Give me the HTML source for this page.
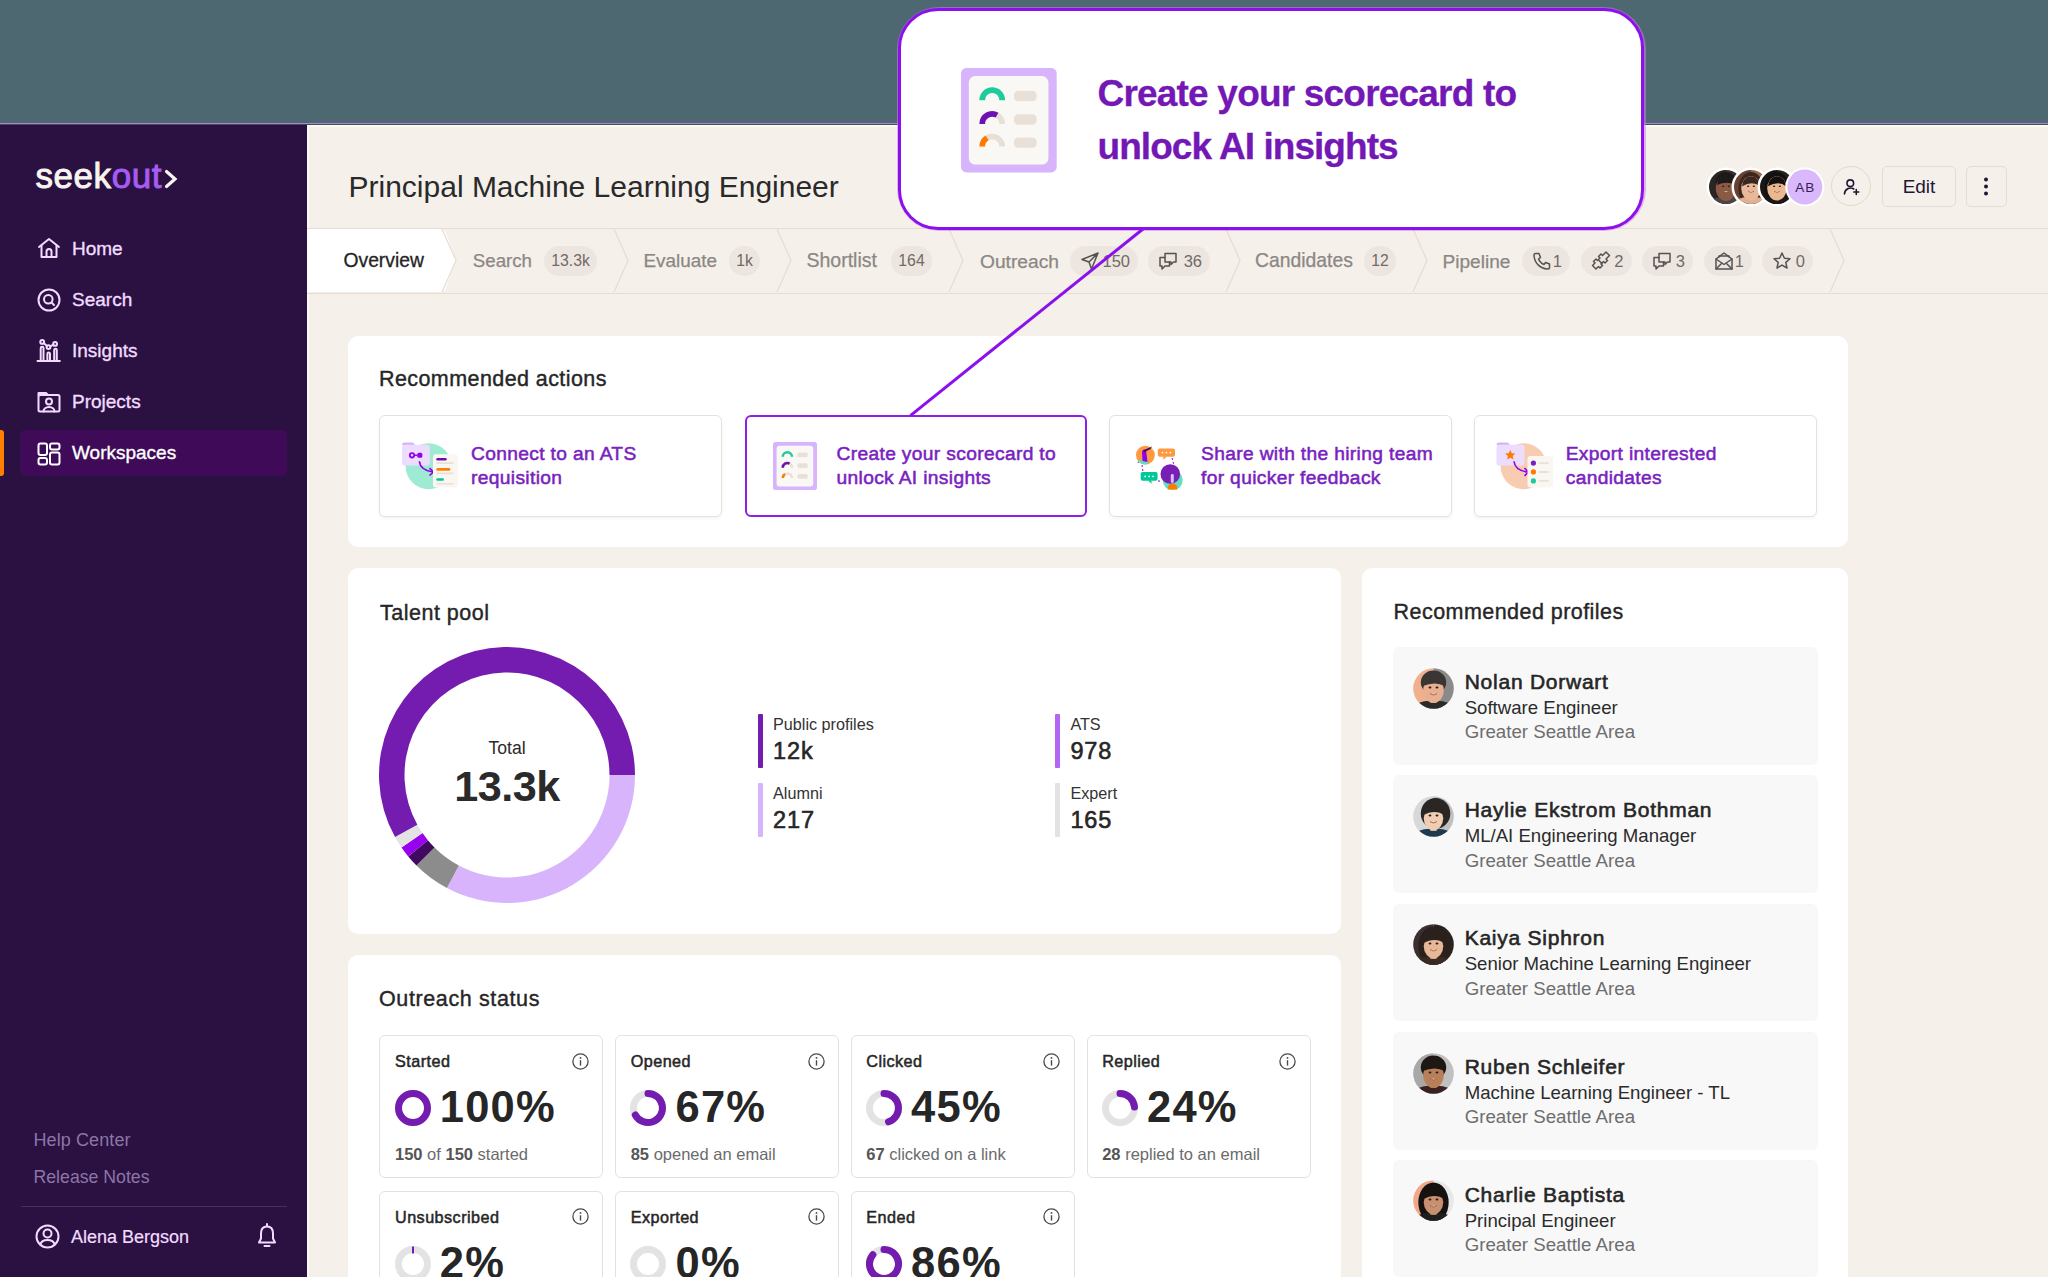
<!DOCTYPE html>
<html><head><meta charset="utf-8"><title>SeekOut</title>
<style>
html,body{margin:0;padding:0;}
body{width:2048px;height:1277px;overflow:hidden;position:relative;background:#f5f0ea;font-family:"Liberation Sans", sans-serif;}
.t{position:absolute;white-space:nowrap;}
.r{position:absolute;box-sizing:border-box;}
svg.r{overflow:visible;}
</style></head><body>
<div class="r" style="left:0px;top:0px;width:2048px;height:125px;background:#4d6870;"></div><div class="r" style="left:0px;top:123px;width:2048px;height:1px;background:#b57ede;"></div><div class="r" style="left:0px;top:124px;width:2048px;height:1px;background:#3b5258;"></div><div class="r" style="left:0px;top:125px;width:307px;height:1152px;background:#2a1142;"></div><div class="r" style="left:307px;top:125px;width:1741px;height:2px;background:#fcfaf5;"></div><div class="r" style="left:307px;top:125px;width:2px;height:1152px;background:#fcfaf5;"></div><div class="t" style="left:35.50px;top:158.17px;font-size:35px;line-height:35px;color:#f8f5ee;letter-spacing:0.55px;-webkit-text-stroke:0.9px currentColor;">seek<span style="color:#a55cf2">out</span></div><svg class="r" style="left:158.5px;top:165px;" width="22" height="26" viewBox="0 0 22 26"><path d="M7.5 6.5 L16 14 L7.5 21.5" fill="none" stroke="#f8f5ee" stroke-width="3.2" stroke-linecap="round" stroke-linejoin="miter"/></svg><div class="r" style="left:20px;top:430px;width:267px;height:46px;background:#3f0b59;border-radius:5px;"></div><div class="r" style="left:0px;top:430px;width:4px;height:46px;background:#ff8000;border-radius:0 3px 3px 0;"></div><div class="t" style="left:72.00px;top:239.12px;font-size:19px;line-height:19px;color:#f1dcff;-webkit-text-stroke:0.35px currentColor;">Home</div><div class="t" style="left:72.00px;top:290.12px;font-size:19px;line-height:19px;color:#f1dcff;-webkit-text-stroke:0.35px currentColor;">Search</div><div class="t" style="left:72.00px;top:340.92px;font-size:19px;line-height:19px;color:#f1dcff;-webkit-text-stroke:0.35px currentColor;">Insights</div><div class="t" style="left:72.00px;top:391.92px;font-size:19px;line-height:19px;color:#f1dcff;-webkit-text-stroke:0.35px currentColor;">Projects</div><div class="t" style="left:72.00px;top:442.92px;font-size:19px;line-height:19px;color:#ffffff;-webkit-text-stroke:0.35px currentColor;">Workspaces</div><svg class="r" style="left:37px;top:237px;" width="24" height="22" viewBox="0 0 24 22"><path d="M2 10 L12 2 L22 10" fill="none" stroke="#f1dcff" stroke-width="2" stroke-linecap="round" stroke-linejoin="round"/><path d="M4.5 8.5 V20 H19.5 V8.5" fill="none" stroke="#f1dcff" stroke-width="2" stroke-linecap="round" stroke-linejoin="round"/><path d="M9.5 20 V14.5 A2.5 2.5 0 0 1 14.5 14.5 V20" fill="none" stroke="#f1dcff" stroke-width="2" stroke-linecap="round" stroke-linejoin="round"/></svg><svg class="r" style="left:37px;top:288px;" width="24" height="24" viewBox="0 0 24 24"><circle cx="12" cy="12" r="10.5" fill="none" stroke="#f1dcff" stroke-width="2" stroke-linecap="round" stroke-linejoin="round"/><circle cx="11.3" cy="11.3" r="4.3" fill="none" stroke="#f1dcff" stroke-width="2" stroke-linecap="round" stroke-linejoin="round"/><path d="M14.5 14.5 L17 17" fill="none" stroke="#f1dcff" stroke-width="2" stroke-linecap="round" stroke-linejoin="round"/></svg><svg class="r" style="left:37px;top:339px;" width="24" height="24" viewBox="0 0 24 24"><path d="M0.5 21.9 H22.8" fill="none" stroke="#f1dcff" stroke-width="2" stroke-linecap="round" stroke-linejoin="round" stroke-width="1.7"/><path d="M3.7 21.9 V9.2 A1.4 1.4 0 0 1 6.5 9.2 V21.9 M10.4 21.9 V14.8 A1.3 1.3 0 0 1 13 14.8 V21.9 M17.2 21.9 V11 A1.3 1.3 0 0 1 19.8 11 V21.9" fill="none" stroke="#f1dcff" stroke-width="2" stroke-linecap="round" stroke-linejoin="round" stroke-width="1.6"/><circle cx="5.2" cy="2.9" r="1.9" fill="none" stroke="#f1dcff" stroke-width="2" stroke-linecap="round" stroke-linejoin="round" stroke-width="1.6"/><circle cx="11.5" cy="8.1" r="1.9" fill="none" stroke="#f1dcff" stroke-width="2" stroke-linecap="round" stroke-linejoin="round" stroke-width="1.6"/><circle cx="18.1" cy="4.9" r="1.9" fill="none" stroke="#f1dcff" stroke-width="2" stroke-linecap="round" stroke-linejoin="round" stroke-width="1.6"/><path d="M6.7 4.1 L10 6.9 M13.2 7.3 L16.4 5.7" fill="none" stroke="#f1dcff" stroke-width="2" stroke-linecap="round" stroke-linejoin="round" stroke-width="1.6"/></svg><svg class="r" style="left:37px;top:391px;" width="24" height="22" viewBox="0 0 24 22"><path d="M1.5 4 V2 H9 L11 4" fill="none" stroke="#f1dcff" stroke-width="2" stroke-linecap="round" stroke-linejoin="round"/><rect x="1.5" y="4" width="21" height="16.5" rx="1.5" fill="none" stroke="#f1dcff" stroke-width="2" stroke-linecap="round" stroke-linejoin="round"/><circle cx="12" cy="10.5" r="3" fill="none" stroke="#f1dcff" stroke-width="2" stroke-linecap="round" stroke-linejoin="round"/><path d="M6.5 20.5 A5.5 4.5 0 0 1 17.5 20.5" fill="none" stroke="#f1dcff" stroke-width="2" stroke-linecap="round" stroke-linejoin="round"/></svg><svg class="r" style="left:37px;top:441.5px;" width="24" height="24" viewBox="0 0 24 24"><rect x="1.5" y="1.5" width="8.5" height="11.5" rx="2" fill="none" stroke="#ffffff" stroke-width="2" stroke-linecap="round" stroke-linejoin="round"/><rect x="13" y="1.5" width="9.5" height="6" rx="2" fill="none" stroke="#ffffff" stroke-width="2" stroke-linecap="round" stroke-linejoin="round"/><rect x="1.5" y="16" width="8.5" height="6.5" rx="2" fill="none" stroke="#ffffff" stroke-width="2" stroke-linecap="round" stroke-linejoin="round"/><rect x="13" y="10.5" width="9.5" height="12" rx="2" fill="none" stroke="#ffffff" stroke-width="2" stroke-linecap="round" stroke-linejoin="round"/></svg><div class="t" style="left:33.50px;top:1130.56px;font-size:18px;line-height:18px;color:#8d76a6;letter-spacing:0.1px;">Help Center</div><div class="t" style="left:33.50px;top:1169.02px;font-size:17.7px;line-height:17.7px;color:#8d76a6;">Release Notes</div><div class="r" style="left:21px;top:1206px;width:266px;height:1px;background:#45305c;"></div><div class="t" style="left:71.00px;top:1227.76px;font-size:18px;line-height:18px;color:#f1dcff;-webkit-text-stroke:0.2px currentColor;">Alena Bergson</div><svg class="r" style="left:35px;top:1224px;" width="25" height="25" viewBox="0 0 25 25"><circle cx="12.5" cy="12.5" r="11" fill="none" stroke="#f1dcff" stroke-width="2" stroke-linecap="round" stroke-linejoin="round"/><circle cx="12.5" cy="9.5" r="4" fill="none" stroke="#f1dcff" stroke-width="2" stroke-linecap="round" stroke-linejoin="round"/><path d="M5.2 20.5 A7.5 6 0 0 1 19.8 20.5" fill="none" stroke="#f1dcff" stroke-width="2" stroke-linecap="round" stroke-linejoin="round"/></svg><svg class="r" style="left:256px;top:1223px;" width="22" height="26" viewBox="0 0 22 26"><path d="M11 3.5 C6.5 3.5 5 7 5 10.5 V15.5 L3 19.5 H19 L17 15.5 V10.5 C17 7 15.5 3.5 11 3.5 Z" fill="none" stroke="#f1dcff" stroke-width="2" stroke-linecap="round" stroke-linejoin="round"/><path d="M8.5 23 H13.5" fill="none" stroke="#f1dcff" stroke-width="2" stroke-linecap="round" stroke-linejoin="round"/><path d="M11 1 V3" fill="none" stroke="#f1dcff" stroke-width="2" stroke-linecap="round" stroke-linejoin="round"/></svg><div class="t" style="left:348.50px;top:172.41px;font-size:30px;line-height:30px;color:#2a2a2a;">Principal Machine Learning Engineer</div><svg class="r" style="left:1700px;top:167px;" width="130" height="40" viewBox="0 0 130 40"><clipPath id="hc0"><circle cx="26" cy="20" r="17"/></clipPath><circle cx="26" cy="20" r="19.5" fill="#ffffff"/><g clip-path="url(#hc0)"><rect x="9" y="3" width="17" height="34" fill="#2a2424"/><rect x="26" y="3" width="17" height="34" fill="#3a3030"/><ellipse cx="26" cy="14.9" rx="10.54" ry="9.86" fill="#1e1a1a"/><path d="M9 37 Q12.399999999999999 29.35 26 30.2 Q39.6 29.35 43 37 Z" fill="#4a4444"/><rect x="23.45" y="25.95" width="5.1" height="5.949999999999999" fill="#8a5a44"/><ellipse cx="26" cy="21.36" rx="10.2" ry="12.647999999999998" fill="#8a5a44"/><path d="M16.990000000000002 17.96 A9.01 9.86 0 0 1 35.01 17.96 Q27.7 13.54 16.990000000000002 17.96 Z" fill="#1e1a1a"/><ellipse cx="23.11" cy="19.15" rx="1.1900000000000002" ry="0.765" fill="#2a1e1a"/><ellipse cx="28.89" cy="19.15" rx="1.1900000000000002" ry="0.765" fill="#2a1e1a"/><path d="M23.11 24.25 Q26 26.46 28.89 24.25" fill="#f4ece6" stroke="#8a4a3a" stroke-width="0.68"/></g><clipPath id="hc1"><circle cx="51" cy="20" r="17"/></clipPath><circle cx="51" cy="20" r="19.5" fill="#ffffff"/><g clip-path="url(#hc1)"><rect x="34" y="3" width="17" height="34" fill="#6a4030"/><rect x="51" y="3" width="17" height="34" fill="#9a6a50"/><ellipse cx="51" cy="21.7" rx="12.58" ry="16.66" fill="#3a2820"/><path d="M34 37 Q37.4 29.35 51 30.2 Q64.6 29.35 68 37 Z" fill="#e0b090"/><rect x="48.45" y="25.95" width="5.1" height="5.949999999999999" fill="#e8b898"/><ellipse cx="51" cy="21.36" rx="9.774999999999999" ry="12.120999999999999" fill="#e8b898"/><path d="M41.99 19.15 A9.01 9.86 0 0 1 60.01 19.15 Q52.7 13.54 41.99 19.15 Z" fill="#3a2820"/><ellipse cx="48.11" cy="19.15" rx="1.1900000000000002" ry="0.765" fill="#2a1e1a"/><ellipse cx="53.89" cy="19.15" rx="1.1900000000000002" ry="0.765" fill="#2a1e1a"/><path d="M48.11 24.25 Q51 26.46 53.89 24.25" fill="#f4ece6" stroke="#8a4a3a" stroke-width="0.68"/></g><clipPath id="hc2"><circle cx="77" cy="20" r="17"/></clipPath><circle cx="77" cy="20" r="19.5" fill="#ffffff"/><g clip-path="url(#hc2)"><rect x="60" y="3" width="17" height="34" fill="#1a1616"/><rect x="77" y="3" width="17" height="34" fill="#262222"/><ellipse cx="77" cy="21.7" rx="12.58" ry="16.66" fill="#141010"/><path d="M60 37 Q63.4 29.35 77 30.2 Q90.6 29.35 94 37 Z" fill="#1a1616"/><rect x="74.45" y="25.95" width="5.1" height="5.949999999999999" fill="#eab890"/><ellipse cx="77" cy="21.36" rx="9.774999999999999" ry="12.120999999999999" fill="#eab890"/><path d="M67.99 19.15 A9.01 9.86 0 0 1 86.01 19.15 Q78.7 13.54 67.99 19.15 Z" fill="#141010"/><ellipse cx="74.11" cy="19.15" rx="1.1900000000000002" ry="0.765" fill="#2a1e1a"/><ellipse cx="79.89" cy="19.15" rx="1.1900000000000002" ry="0.765" fill="#2a1e1a"/><path d="M74.11 24.25 Q77 26.46 79.89 24.25" fill="#f4ece6" stroke="#8a4a3a" stroke-width="0.68"/></g><circle cx="104.8" cy="20" r="19.5" fill="#ffffff"/><circle cx="104.8" cy="20" r="17.5" fill="#d9b8fb"/></svg><div class="t" style="left:1785.30px;top:180.87px;font-size:13.5px;line-height:13.5px;color:#3b1a5c;text-align:center;width:40px;letter-spacing:1px;">AB</div><div class="r" style="left:1831px;top:166px;width:40px;height:40px;border:1px solid #e2d9cf;border-radius:50%;"></div><svg class="r" style="left:1840px;top:175px;" width="22" height="22" viewBox="0 0 22 22"><circle cx="10.3" cy="8.2" r="3.3" fill="none" stroke="#231634" stroke-width="1.6"/><path d="M4.5 19 A6 6 0 0 1 13.8 14" fill="none" stroke="#231634" stroke-width="1.6" stroke-linecap="round"/><path d="M16.3 14.5 V19.5 M13.8 17 H18.8" stroke="#231634" stroke-width="1.6" stroke-linecap="round"/></svg><div class="r" style="left:1882px;top:166px;width:74px;height:41px;border:1px solid #e5ddd4;border-radius:5px;"></div><div class="t" style="left:1882.00px;top:177.42px;font-size:19px;line-height:19px;color:#231634;text-align:center;width:74px;">Edit</div><div class="r" style="left:1966px;top:166px;width:41px;height:41px;border:1px solid #e5ddd4;border-radius:5px;"></div><svg class="r" style="left:1980px;top:176px;" width="12" height="22" viewBox="0 0 12 22"><circle cx="6" cy="3.5" r="2" fill="#231634"/><circle cx="6" cy="10.5" r="2" fill="#231634"/><circle cx="6" cy="17.5" r="2" fill="#231634"/></svg><div class="r" style="left:307px;top:228px;width:1741px;height:1px;background:#e6dcd2;"></div><div class="r" style="left:307px;top:293px;width:1741px;height:1px;background:#e6dcd2;"></div><svg class="r" style="left:307px;top:228px;" width="1741" height="66" viewBox="0 0 1741 66"><path d="M0 1 H134 Q137 1 138.5 4 L149 32.5 L138.5 61 Q137 64 134 64 H0 Z" fill="#ffffff"/><path d="M135 1 L149 32.5 L135 64" fill="none" stroke="#e6dcd2" stroke-width="1.2"/><path d="M307 1 L321 32.5 L307 64" fill="none" stroke="#e6dcd2" stroke-width="1.2"/><path d="M470 1 L484 32.5 L470 64" fill="none" stroke="#e6dcd2" stroke-width="1.2"/><path d="M642 1 L656 32.5 L642 64" fill="none" stroke="#e6dcd2" stroke-width="1.2"/><path d="M919 1 L933 32.5 L919 64" fill="none" stroke="#e6dcd2" stroke-width="1.2"/><path d="M1106 1 L1120 32.5 L1106 64" fill="none" stroke="#e6dcd2" stroke-width="1.2"/><path d="M1523 1 L1537 32.5 L1523 64" fill="none" stroke="#e6dcd2" stroke-width="1.2"/></svg><div class="t" style="left:343.50px;top:251.16px;font-size:19.3px;line-height:19.3px;color:#242424;-webkit-text-stroke:0.3px currentColor;">Overview</div><div class="t" style="left:472.80px;top:251.97px;font-size:18.7px;line-height:18.7px;color:#8b8784;-webkit-text-stroke:0.25px currentColor;">Search</div><div class="t" style="left:643.50px;top:251.80px;font-size:18.9px;line-height:18.9px;color:#8b8784;-webkit-text-stroke:0.25px currentColor;">Evaluate</div><div class="t" style="left:806.50px;top:251.29px;font-size:19.5px;line-height:19.5px;color:#8b8784;-webkit-text-stroke:0.25px currentColor;">Shortlist</div><div class="t" style="left:980.00px;top:251.55px;font-size:19.2px;line-height:19.2px;color:#8b8784;-webkit-text-stroke:0.25px currentColor;">Outreach</div><div class="t" style="left:1255.00px;top:251.42px;font-size:19.35px;line-height:19.35px;color:#8b8784;-webkit-text-stroke:0.25px currentColor;">Candidates</div><div class="t" style="left:1442.50px;top:251.63px;font-size:19.1px;line-height:19.1px;color:#8b8784;-webkit-text-stroke:0.25px currentColor;">Pipeline</div><div class="r" style="left:544px;top:245.5px;width:53px;height:30.5px;background:#ede6e0;border-radius:15px;"></div><div class="t" style="left:544.00px;top:253.43px;font-size:15.8px;line-height:15.8px;color:#6f6b67;text-align:center;width:53px;">13.3k</div><div class="r" style="left:729px;top:245.5px;width:31px;height:30.5px;background:#ede6e0;border-radius:15px;"></div><div class="t" style="left:729.00px;top:253.43px;font-size:15.8px;line-height:15.8px;color:#6f6b67;text-align:center;width:31px;">1k</div><div class="r" style="left:891px;top:245.5px;width:41px;height:30.5px;background:#ede6e0;border-radius:15px;"></div><div class="t" style="left:891.00px;top:253.43px;font-size:15.8px;line-height:15.8px;color:#6f6b67;text-align:center;width:41px;">164</div><div class="r" style="left:1364px;top:245.5px;width:32px;height:30.5px;background:#ede6e0;border-radius:15px;"></div><div class="t" style="left:1364.00px;top:253.43px;font-size:15.8px;line-height:15.8px;color:#6f6b67;text-align:center;width:32px;">12</div><div class="r" style="left:1070px;top:245.5px;width:68px;height:30.5px;background:#ede6e0;border-radius:15px;"></div><svg class="r" style="left:1080px;top:251px;" width="20" height="20" viewBox="0 0 20 20"><path d="M18 2 L2 8.5 L9 11 L11.5 18 Z M18 2 L9 11" fill="none" stroke="#555250" stroke-width="1.5" stroke-linecap="round" stroke-linejoin="round"/></svg><div class="t" style="left:1080.00px;top:252.83px;font-size:16.5px;line-height:16.5px;color:#6f6b67;text-align:right;width:50px;">150</div><div class="r" style="left:1148px;top:245.5px;width:62px;height:30.5px;background:#ede6e0;border-radius:15px;"></div><svg class="r" style="left:1158px;top:251px;" width="20" height="20" viewBox="0 0 20 20"><path d="M7 2.5 H18 V11 H15.5 L13 13.5 V11 H7 Z" fill="none" stroke="#555250" stroke-width="1.5" stroke-linecap="round" stroke-linejoin="round"/><path d="M7 6.5 H2 V15 H4 V18 L7 15 H11.5 V11" fill="none" stroke="#555250" stroke-width="1.5" stroke-linecap="round" stroke-linejoin="round"/></svg><div class="t" style="left:1152.00px;top:252.83px;font-size:16.5px;line-height:16.5px;color:#6f6b67;text-align:right;width:50px;">36</div><div class="r" style="left:1521.6px;top:245.5px;width:48.40000000000009px;height:30.5px;background:#ede6e0;border-radius:15px;"></div><svg class="r" style="left:1531.6px;top:251px;" width="20" height="20" viewBox="0 0 20 20"><path d="M3.5 2.5 L7 2.5 L8.5 6.5 L6.5 8 C7.5 10.5 9.5 12.5 12 13.5 L13.5 11.5 L17.5 13 V16.5 C17.5 17.5 16.5 18 15.5 18 C8 17.5 2.5 12 2 4.5 C2 3.5 2.5 2.5 3.5 2.5 Z" fill="none" stroke="#555250" stroke-width="1.5" stroke-linecap="round" stroke-linejoin="round"/></svg><div class="t" style="left:1512.00px;top:252.83px;font-size:16.5px;line-height:16.5px;color:#6f6b67;text-align:right;width:50px;">1</div><div class="r" style="left:1580.5px;top:245.5px;width:51.0px;height:30.5px;background:#ede6e0;border-radius:15px;"></div><svg class="r" style="left:1590.5px;top:251px;" width="20" height="20" viewBox="0 0 20 20"><path d="M1.5 14.5 L5 18 L7.5 15.5 L9 17 L11.5 14.5 L10 13 L12.5 10.5 L14 12 L16.5 9.5 L15 8 L18.5 4.5 L15 1 L11.5 4.5 L10 3 L7.5 5.5 L9 7 L6.5 9.5 L5 8 L2.5 10.5 L4 12 Z" fill="none" stroke="#555250" stroke-width="1.5" stroke-linecap="round" stroke-linejoin="round"/><path d="M8 9.5 L11 12.5" fill="none" stroke="#555250" stroke-width="1.5" stroke-linecap="round" stroke-linejoin="round"/></svg><div class="t" style="left:1573.50px;top:252.83px;font-size:16.5px;line-height:16.5px;color:#6f6b67;text-align:right;width:50px;">2</div><div class="r" style="left:1642px;top:245.5px;width:51px;height:30.5px;background:#ede6e0;border-radius:15px;"></div><svg class="r" style="left:1652px;top:251px;" width="20" height="20" viewBox="0 0 20 20"><path d="M7 2.5 H18 V11 H15.5 L13 13.5 V11 H7 Z" fill="none" stroke="#555250" stroke-width="1.5" stroke-linecap="round" stroke-linejoin="round"/><path d="M7 6.5 H2 V15 H4 V18 L7 15 H11.5 V11" fill="none" stroke="#555250" stroke-width="1.5" stroke-linecap="round" stroke-linejoin="round"/></svg><div class="t" style="left:1635.00px;top:252.83px;font-size:16.5px;line-height:16.5px;color:#6f6b67;text-align:right;width:50px;">3</div><div class="r" style="left:1703.5px;top:245.5px;width:48.5px;height:30.5px;background:#ede6e0;border-radius:15px;"></div><svg class="r" style="left:1713.5px;top:251px;" width="20" height="20" viewBox="0 0 20 20"><path d="M2 8 L10 2 L18 8 V18 H2 Z" fill="none" stroke="#555250" stroke-width="1.5" stroke-linecap="round" stroke-linejoin="round"/><path d="M2 8 L10 13.5 L18 8 M2 18 L8 12 M18 18 L12 12" fill="none" stroke="#555250" stroke-width="1.5" stroke-linecap="round" stroke-linejoin="round"/><path d="M5 6 V5 H15 V6" fill="none" stroke="#555250" stroke-width="1.5" stroke-linecap="round" stroke-linejoin="round"/></svg><div class="t" style="left:1694.00px;top:252.83px;font-size:16.5px;line-height:16.5px;color:#6f6b67;text-align:right;width:50px;">1</div><div class="r" style="left:1762px;top:245.5px;width:51px;height:30.5px;background:#ede6e0;border-radius:15px;"></div><svg class="r" style="left:1772px;top:251px;" width="20" height="20" viewBox="0 0 20 20"><path d="M10 2 L12.4 7.2 L18 7.7 L13.8 11.4 L15 17 L10 14.1 L5 17 L6.2 11.4 L2 7.7 L7.6 7.2 Z" fill="none" stroke="#555250" stroke-width="1.5" stroke-linecap="round" stroke-linejoin="round"/></svg><div class="t" style="left:1755.00px;top:252.83px;font-size:16.5px;line-height:16.5px;color:#6f6b67;text-align:right;width:50px;">0</div><div class="r" style="left:348px;top:336px;width:1500px;height:211px;background:#ffffff;border-radius:10px;"></div><div class="t" style="left:379.00px;top:369.00px;font-size:21.5px;line-height:21.5px;color:#262626;letter-spacing:0.42px;-webkit-text-stroke:0.4px currentColor;">Recommended actions</div><div class="r" style="left:379.3px;top:414.5px;width:342.7px;height:102px;border:1.5px solid #e9e1d9;border-radius:6px;background:#fff;box-shadow:0 2px 3px rgba(120,90,60,0.06);"></div><div class="r" style="left:744.5px;top:414.5px;width:342.5px;height:102px;border:2px solid #8f1ee6;border-radius:6px;background:#fff;"></div><div class="r" style="left:1109px;top:414.5px;width:343px;height:102px;border:1.5px solid #e9e1d9;border-radius:6px;background:#fff;box-shadow:0 2px 3px rgba(120,90,60,0.06);"></div><div class="r" style="left:1473.6px;top:414.5px;width:343.4000000000001px;height:102px;border:1.5px solid #e9e1d9;border-radius:6px;background:#fff;box-shadow:0 2px 3px rgba(120,90,60,0.06);"></div><div class="t" style="left:471.00px;top:444.05px;font-size:19.2px;line-height:19.2px;color:#7a1fc0;letter-spacing:0.35px;-webkit-text-stroke:0.55px currentColor;">Connect to an ATS</div><div class="t" style="left:471.00px;top:468.05px;font-size:19.2px;line-height:19.2px;color:#7a1fc0;letter-spacing:0.35px;-webkit-text-stroke:0.55px currentColor;">requisition</div><div class="t" style="left:836.50px;top:444.05px;font-size:19.2px;line-height:19.2px;color:#7a1fc0;letter-spacing:0.35px;-webkit-text-stroke:0.55px currentColor;">Create your scorecard to</div><div class="t" style="left:836.50px;top:468.05px;font-size:19.2px;line-height:19.2px;color:#7a1fc0;letter-spacing:0.35px;-webkit-text-stroke:0.55px currentColor;">unlock AI insights</div><div class="t" style="left:1201.00px;top:444.05px;font-size:19.2px;line-height:19.2px;color:#7a1fc0;letter-spacing:0.35px;-webkit-text-stroke:0.55px currentColor;">Share with the hiring team</div><div class="t" style="left:1201.00px;top:468.05px;font-size:19.2px;line-height:19.2px;color:#7a1fc0;letter-spacing:0.35px;-webkit-text-stroke:0.55px currentColor;">for quicker feedback</div><div class="t" style="left:1565.70px;top:444.05px;font-size:19.2px;line-height:19.2px;color:#7a1fc0;letter-spacing:0.35px;-webkit-text-stroke:0.55px currentColor;">Export interested</div><div class="t" style="left:1565.70px;top:468.05px;font-size:19.2px;line-height:19.2px;color:#7a1fc0;letter-spacing:0.35px;-webkit-text-stroke:0.55px currentColor;">candidates</div><svg class="r" style="left:772.75px;top:441.6px;" width="44" height="48" viewBox="0 0 44 48"><g transform="scale(1)"><rect x="0" y="0" width="44" height="48" rx="2.5" fill="#d8b4fc"/><rect x="3.6" y="3.7" width="36.6" height="40.7" rx="3" fill="#faf8f4"/><path d="M9.75 14.80 A4.6 4.6 0 0 1 18.95 14.80" fill="none" stroke="#1ecb9d" stroke-width="2.6" stroke-linecap="butt"/><rect x="24.3" y="10.5" width="10.5" height="4.8" rx="2" fill="#e9e1d8"/><path d="M9.75 25.70 A4.6 4.6 0 0 1 18.95 25.70" fill="none" stroke="#e8dfd6" stroke-width="2.6" stroke-linecap="butt"/><path d="M9.75 25.70 A4.6 4.6 0 0 1 16.57 21.67" fill="none" stroke="#6c12b3" stroke-width="2.6" stroke-linecap="butt"/><rect x="24.3" y="21.3" width="10.5" height="4.8" rx="2" fill="#e9e1d8"/><path d="M9.75 36.10 A4.6 4.6 0 0 1 18.95 36.10" fill="none" stroke="#e8dfd6" stroke-width="2.6" stroke-linecap="butt"/><path d="M9.75 36.10 A4.6 4.6 0 0 1 12.01 32.14" fill="none" stroke="#ff7a00" stroke-width="2.6" stroke-linecap="butt"/><rect x="24.3" y="31.900000000000002" width="10.5" height="4.8" rx="2" fill="#e9e1d8"/></g></svg><svg class="r" style="left:395px;top:435px;" width="70" height="60" viewBox="0 0 70 60"><circle cx="33.6" cy="31.2" r="23" fill="#9eead2"/><path d="M7 10 Q7 7.5 9.5 7.5 H17 Q19 7.5 20 10 Z" fill="#d9b0fc"/><rect x="7" y="9.8" width="27.8" height="20.7" rx="2.5" fill="#ecdcfd"/><circle cx="17" cy="20.3" r="2.2" fill="none" stroke="#9000e8" stroke-width="1.8"/><rect x="22.3" y="17.8" width="5" height="5" rx="1.5" fill="#9000e8"/><path d="M19.2 20.3 H22.3" stroke="#9000e8" stroke-width="1.5"/><path d="M24.4 26.3 Q25 35 38 37" fill="none" stroke="#9000e8" stroke-width="1.6"/><path d="M34.5 33.2 L38.5 37 L34.5 40.5" fill="none" stroke="#9000e8" stroke-width="1.6"/><rect x="38" y="19.3" width="25" height="33.3" rx="3" fill="#faf7f2"/><rect x="41.3" y="23" width="10.4" height="2.6" rx="1.3" fill="#6e10b0"/><rect x="41.3" y="27.2" width="17.4" height="1.7" rx="0.8" fill="#e9e0d6"/><rect x="41.3" y="33.1" width="14.1" height="2.6" rx="1.3" fill="#ff8000"/><rect x="41.3" y="37.6" width="17.4" height="1.7" rx="0.8" fill="#e9e0d6"/><rect x="41.3" y="43.2" width="7.7" height="2.6" rx="1.3" fill="#00c896"/><rect x="41.3" y="47.9" width="17.4" height="1.7" rx="0.8" fill="#e9e0d6"/></svg><svg class="r" style="left:1490px;top:435px;" width="70" height="60" viewBox="0 0 70 60"><circle cx="33.6" cy="31.2" r="23" fill="#f8ccb0"/><path d="M6.5 10 Q6.5 7.5 9 7.5 H17 Q19 7.5 20 10 Z" fill="#d9b0fc"/><rect x="6.5" y="9.8" width="28" height="20.7" rx="2.5" fill="#ecdcfd"/><path d="M20.3 15 L21.8 18.2 L25.4 18.6 L22.7 21 L23.5 24.6 L20.3 22.7 L17.1 24.6 L17.9 21 L15.2 18.6 L18.8 18.2 Z" fill="#ff7a00"/><path d="M24 26.3 Q24.8 35.5 38 37" fill="none" stroke="#9000e8" stroke-width="1.6"/><path d="M34.5 33 L38.5 37 L34.5 40.8" fill="none" stroke="#9000e8" stroke-width="1.6"/><rect x="37.5" y="21" width="25.5" height="31.5" rx="3" fill="#faf7f2"/><circle cx="43.4" cy="28.1" r="2.6" fill="#7a1fc0"/><rect x="48.5" y="27.2" width="10.3" height="1.8" rx="0.9" fill="#e9e0d6"/><circle cx="43.4" cy="36.9" r="2.6" fill="#ff7a00"/><rect x="48.5" y="36.1" width="10.3" height="1.8" rx="0.9" fill="#e9e0d6"/><circle cx="43.4" cy="45.9" r="2.6" fill="#1ecb9d"/><rect x="48.5" y="45" width="10.3" height="1.8" rx="0.9" fill="#e9e0d6"/></svg><svg class="r" style="left:1128px;top:435px;" width="70" height="60" viewBox="0 0 70 60"><path d="M14 15 L10 28 M44 23 L47 34 M14 30 L15 37 M30 46 L33 46" fill="none" stroke="#9000e8" stroke-width="1" stroke-dasharray="2 2"/><circle cx="17.4" cy="20.1" r="9.4" fill="#fd9a40"/><path d="M9.5 25 Q12 29.5 17.4 29.5 Q21 29.5 20 26 Z" fill="#5fdfc0"/><path d="M14 17 Q15 13.5 18 15 L19.5 27 L14.5 26 Z" fill="#9000e8"/><path d="M15 15.5 L24 11.5 L22.5 14 L16.5 17 Z" fill="#3a0a60"/><rect x="29.8" y="13.4" width="17.2" height="8.4" rx="2" fill="#fd9a40"/><path d="M35 21.5 L35.5 24.5 L39 21.5 Z" fill="#fd9a40"/><circle cx="34.5" cy="17.6" r="0.9" fill="#fff"/><circle cx="38.4" cy="17.6" r="0.9" fill="#fff"/><circle cx="42.3" cy="17.6" r="0.9" fill="#fff"/><rect x="12.7" y="37.1" width="16.9" height="8.7" rx="2" fill="#00c896"/><path d="M20 45.5 L23.5 48.8 L23.5 45.5 Z" fill="#00c896"/><circle cx="17.2" cy="41.4" r="0.9" fill="#fff"/><circle cx="21.1" cy="41.4" r="0.9" fill="#fff"/><circle cx="25" cy="41.4" r="0.9" fill="#fff"/><circle cx="44.7" cy="45.1" r="10" fill="#5fdfc0"/><circle cx="42.3" cy="39" r="9.8" fill="#7a1fb5"/><rect x="42.8" y="39" width="3" height="9" rx="1.4" fill="#dcbcfc"/><path d="M39.5 54.5 Q39.5 48.5 44.5 48.5 Q49.5 48.5 49.5 54.5 Z" fill="#ff7a00"/></svg><div class="r" style="left:896.5px;top:6.5px;width:749px;height:224px;border-radius:42px;background:rgba(200,130,235,0.55);"></div><div class="r" style="left:898px;top:8px;width:746px;height:222px;border:3px solid #8c10ec;border-radius:40px;background:#ffffff;"></div><svg class="r" style="left:961px;top:67.8px;" width="96" height="104" viewBox="0 0 96 104"><g transform="scale(2.175)"><rect x="0" y="0" width="44" height="48" rx="2.5" fill="#d8b4fc"/><rect x="3.6" y="3.7" width="36.6" height="40.7" rx="3" fill="#faf8f4"/><path d="M9.75 14.80 A4.6 4.6 0 0 1 18.95 14.80" fill="none" stroke="#1ecb9d" stroke-width="2.6" stroke-linecap="butt"/><rect x="24.3" y="10.5" width="10.5" height="4.8" rx="2" fill="#e9e1d8"/><path d="M9.75 25.70 A4.6 4.6 0 0 1 18.95 25.70" fill="none" stroke="#e8dfd6" stroke-width="2.6" stroke-linecap="butt"/><path d="M9.75 25.70 A4.6 4.6 0 0 1 16.57 21.67" fill="none" stroke="#6c12b3" stroke-width="2.6" stroke-linecap="butt"/><rect x="24.3" y="21.3" width="10.5" height="4.8" rx="2" fill="#e9e1d8"/><path d="M9.75 36.10 A4.6 4.6 0 0 1 18.95 36.10" fill="none" stroke="#e8dfd6" stroke-width="2.6" stroke-linecap="butt"/><path d="M9.75 36.10 A4.6 4.6 0 0 1 12.01 32.14" fill="none" stroke="#ff7a00" stroke-width="2.6" stroke-linecap="butt"/><rect x="24.3" y="31.900000000000002" width="10.5" height="4.8" rx="2" fill="#e9e1d8"/></g></svg><div class="t" style="left:1097.50px;top:75.28px;font-size:37px;line-height:37px;color:#7418b5;font-weight:700;letter-spacing:-0.8px;-webkit-text-stroke:0.3px currentColor;">Create your scorecard to</div><div class="t" style="left:1097.50px;top:127.68px;font-size:37px;line-height:37px;color:#7418b5;font-weight:700;letter-spacing:-0.95px;-webkit-text-stroke:0.3px currentColor;">unlock AI insights</div><svg class="r" style="left:900px;top:220px;" width="260" height="200" viewBox="0 0 260 200"><path d="M243 9 L11.3 194.8" stroke="#8c10ec" stroke-width="3" stroke-linecap="round"/></svg><div class="r" style="left:348px;top:568px;width:993.4px;height:366px;background:#ffffff;border-radius:10px;"></div><div class="t" style="left:380.00px;top:602.60px;font-size:21.5px;line-height:21.5px;color:#262626;letter-spacing:0.5px;-webkit-text-stroke:0.4px currentColor;">Talent pool</div><svg class="r" style="left:376.8px;top:645.4px;" width="260" height="260" viewBox="0 0 260 260"><path d="M258.00 130.00 A128 128 0 0 1 69.91 243.02 L81.88 220.50 A102.5 102.5 0 0 0 232.50 130.00 Z" fill="#d8b4fc"/><path d="M69.91 243.02 A128 128 0 0 1 39.49 220.51 L57.52 202.48 A102.5 102.5 0 0 0 81.88 220.50 Z" fill="#8c8c8c"/><path d="M39.49 220.51 A128 128 0 0 1 31.23 211.42 L50.91 195.20 A102.5 102.5 0 0 0 57.52 202.48 Z" fill="#400a5e"/><path d="M31.23 211.42 A128 128 0 0 1 24.51 202.50 L45.53 188.06 A102.5 102.5 0 0 0 50.91 195.20 Z" fill="#9a00f0"/><path d="M24.51 202.50 A128 128 0 0 1 18.05 192.06 L40.35 179.69 A102.5 102.5 0 0 0 45.53 188.06 Z" fill="#e3e3e3"/><path d="M18.05 192.06 A128 128 0 1 1 258.00 130.00 L232.50 130.00 A102.5 102.5 0 1 0 40.35 179.69 Z" fill="#751cb0"/></svg><div class="t" style="left:457.00px;top:740.30px;font-size:17.6px;line-height:17.6px;color:#2a2a2a;text-align:center;width:100px;">Total</div><div class="t" style="left:437.00px;top:765.23px;font-size:43.2px;line-height:43.2px;color:#2a2a2a;font-weight:700;text-align:center;width:140px;letter-spacing:-0.5px;">13.3k</div><div class="r" style="left:757.6px;top:714px;width:5.3px;height:53.6px;background:#751cb0;border-radius:1px;"></div><div class="t" style="left:773.00px;top:715.79px;font-size:16.2px;line-height:16.2px;color:#333333;">Public profiles</div><div class="t" style="left:773.00px;top:740.41px;font-size:23.5px;line-height:23.5px;color:#262626;letter-spacing:0.9px;-webkit-text-stroke:0.6px currentColor;">12k</div><div class="r" style="left:757.6px;top:783px;width:5.3px;height:53.6px;background:#d8b4fc;border-radius:1px;"></div><div class="t" style="left:773.00px;top:784.79px;font-size:16.2px;line-height:16.2px;color:#333333;">Alumni</div><div class="t" style="left:773.00px;top:809.41px;font-size:23.5px;line-height:23.5px;color:#262626;letter-spacing:0.9px;-webkit-text-stroke:0.6px currentColor;">217</div><div class="r" style="left:1055px;top:714px;width:5.3px;height:53.6px;background:#b366f2;border-radius:1px;"></div><div class="t" style="left:1070.40px;top:715.79px;font-size:16.2px;line-height:16.2px;color:#333333;">ATS</div><div class="t" style="left:1070.40px;top:740.41px;font-size:23.5px;line-height:23.5px;color:#262626;letter-spacing:0.9px;-webkit-text-stroke:0.6px currentColor;">978</div><div class="r" style="left:1055px;top:783px;width:5.3px;height:53.6px;background:#e3e3e3;border-radius:1px;"></div><div class="t" style="left:1070.40px;top:784.79px;font-size:16.2px;line-height:16.2px;color:#333333;">Expert</div><div class="t" style="left:1070.40px;top:809.41px;font-size:23.5px;line-height:23.5px;color:#262626;letter-spacing:0.9px;-webkit-text-stroke:0.6px currentColor;">165</div><div class="r" style="left:1361.8px;top:568px;width:486.2px;height:720px;background:#ffffff;border-radius:10px;"></div><div class="t" style="left:1393.60px;top:602.40px;font-size:21.5px;line-height:21.5px;color:#262626;letter-spacing:0.45px;-webkit-text-stroke:0.4px currentColor;">Recommended profiles</div><div class="r" style="left:1392.5px;top:647px;width:425px;height:117.5px;background:#f8f8f8;border-radius:6px;"></div><svg class="r" style="left:1413px;top:667.5px;" width="41" height="41" viewBox="0 0 41 41"><clipPath id="pc0"><circle cx="20.5" cy="20.5" r="20.3"/></clipPath><g clip-path="url(#pc0)"><rect x="0.0" y="0.0" width="20.5" height="41.0" fill="#f0b090"/><rect x="20.5" y="0.0" width="20.5" height="41.0" fill="#8a8a8a"/><ellipse cx="20.5" cy="14.350000000000001" rx="12.709999999999999" ry="11.889999999999999" fill="#3a3634"/><path d="M0.0 41.0 Q4.099999999999998 31.775 20.5 32.8 Q36.900000000000006 31.775 41.0 41.0 Z" fill="#2a2a2a"/><rect x="17.425" y="27.675" width="6.1499999999999995" height="7.175" fill="#e8b090"/><ellipse cx="20.5" cy="22.14" rx="10.25" ry="12.709999999999999" fill="#e8b090"/><path d="M9.635 18.04 A10.865 11.889999999999999 0 0 1 31.365000000000002 18.04 Q22.55 12.71 9.635 18.04 Z" fill="#3a3634"/><ellipse cx="17.015" cy="19.475" rx="1.435" ry="0.9225" fill="#2a1e1a"/><ellipse cx="23.985" cy="19.475" rx="1.435" ry="0.9225" fill="#2a1e1a"/><path d="M17.015 25.625 Q20.5 28.29 23.985 25.625" fill="#f4ece6" stroke="#8a4a3a" stroke-width="0.8200000000000001"/></g></svg><div class="t" style="left:1464.70px;top:670.82px;font-size:21px;line-height:21px;color:#262626;letter-spacing:0.75px;-webkit-text-stroke:0.6px currentColor;">Nolan Dorwart</div><div class="t" style="left:1464.70px;top:698.86px;font-size:18.6px;line-height:18.6px;color:#2b2b2b;">Software Engineer</div><div class="t" style="left:1464.70px;top:723.37px;font-size:18.7px;line-height:18.7px;color:#6e6e6e;">Greater Seattle Area</div><div class="r" style="left:1392.5px;top:775.4px;width:425px;height:117.5px;background:#f8f8f8;border-radius:6px;"></div><svg class="r" style="left:1413px;top:795.9px;" width="41" height="41" viewBox="0 0 41 41"><clipPath id="pc1"><circle cx="20.5" cy="20.5" r="20.3"/></clipPath><g clip-path="url(#pc1)"><rect x="0.0" y="0.0" width="20.5" height="41.0" fill="#d8d8d8"/><rect x="20.5" y="0.0" width="20.5" height="41.0" fill="#c0c0c0"/><ellipse cx="22.55" cy="17.425" rx="14.76" ry="15.375" fill="#2a2624"/><path d="M0.0 41.0 Q4.099999999999998 31.775 20.5 32.8 Q36.900000000000006 31.775 41.0 41.0 Z" fill="#1e3a50"/><rect x="17.425" y="27.675" width="6.1499999999999995" height="7.175" fill="#f0ccb0"/><ellipse cx="20.5" cy="22.14" rx="9.737499999999999" ry="12.074499999999999" fill="#f0ccb0"/><path d="M9.635 19.475 A10.865 11.889999999999999 0 0 1 31.365000000000002 19.475 Q22.55 12.71 9.635 19.475 Z" fill="#2a2624"/><ellipse cx="17.015" cy="19.475" rx="1.435" ry="0.9225" fill="#2a1e1a"/><ellipse cx="23.985" cy="19.475" rx="1.435" ry="0.9225" fill="#2a1e1a"/><path d="M17.015 25.625 Q20.5 28.29 23.985 25.625" fill="#f4ece6" stroke="#8a4a3a" stroke-width="0.8200000000000001"/></g></svg><div class="t" style="left:1464.70px;top:799.22px;font-size:21px;line-height:21px;color:#262626;letter-spacing:0.75px;-webkit-text-stroke:0.6px currentColor;">Haylie Ekstrom Bothman</div><div class="t" style="left:1464.70px;top:827.26px;font-size:18.6px;line-height:18.6px;color:#2b2b2b;">ML/AI Engineering Manager</div><div class="t" style="left:1464.70px;top:851.77px;font-size:18.7px;line-height:18.7px;color:#6e6e6e;">Greater Seattle Area</div><div class="r" style="left:1392.5px;top:903.5px;width:425px;height:117.5px;background:#f8f8f8;border-radius:6px;"></div><svg class="r" style="left:1413px;top:924.0px;" width="41" height="41" viewBox="0 0 41 41"><clipPath id="pc2"><circle cx="20.5" cy="20.5" r="20.3"/></clipPath><g clip-path="url(#pc2)"><rect x="0.0" y="0.0" width="20.5" height="41.0" fill="#3a3030"/><rect x="20.5" y="0.0" width="20.5" height="41.0" fill="#2a2220"/><ellipse cx="20.5" cy="22.55" rx="15.17" ry="20.09" fill="#2a201c"/><path d="M0.0 41.0 Q4.099999999999998 31.775 20.5 32.8 Q36.900000000000006 31.775 41.0 41.0 Z" fill="#3a2a24"/><rect x="17.425" y="27.675" width="6.1499999999999995" height="7.175" fill="#e6b898"/><ellipse cx="20.5" cy="22.14" rx="9.737499999999999" ry="12.074499999999999" fill="#e6b898"/><path d="M9.635 19.475 A10.865 11.889999999999999 0 0 1 31.365000000000002 19.475 Q22.55 12.71 9.635 19.475 Z" fill="#2a201c"/><ellipse cx="17.015" cy="19.475" rx="1.435" ry="0.9225" fill="#2a1e1a"/><ellipse cx="23.985" cy="19.475" rx="1.435" ry="0.9225" fill="#2a1e1a"/><path d="M17.015 25.625 Q20.5 28.29 23.985 25.625" fill="#f4ece6" stroke="#8a4a3a" stroke-width="0.8200000000000001"/></g></svg><div class="t" style="left:1464.70px;top:927.32px;font-size:21px;line-height:21px;color:#262626;letter-spacing:0.75px;-webkit-text-stroke:0.6px currentColor;">Kaiya Siphron</div><div class="t" style="left:1464.70px;top:955.36px;font-size:18.6px;line-height:18.6px;color:#2b2b2b;">Senior Machine Learning Engineer</div><div class="t" style="left:1464.70px;top:979.87px;font-size:18.7px;line-height:18.7px;color:#6e6e6e;">Greater Seattle Area</div><div class="r" style="left:1392.5px;top:1032px;width:425px;height:117.5px;background:#f8f8f8;border-radius:6px;"></div><svg class="r" style="left:1413px;top:1052.5px;" width="41" height="41" viewBox="0 0 41 41"><clipPath id="pc3"><circle cx="20.5" cy="20.5" r="20.3"/></clipPath><g clip-path="url(#pc3)"><rect x="0.0" y="0.0" width="20.5" height="41.0" fill="#a8a8a8"/><rect x="20.5" y="0.0" width="20.5" height="41.0" fill="#c0c0c0"/><ellipse cx="20.5" cy="14.350000000000001" rx="12.709999999999999" ry="11.889999999999999" fill="#1e1814"/><path d="M0.0 41.0 Q4.099999999999998 31.775 20.5 32.8 Q36.900000000000006 31.775 41.0 41.0 Z" fill="#3a2020"/><rect x="17.425" y="27.675" width="6.1499999999999995" height="7.175" fill="#b88058"/><ellipse cx="20.5" cy="22.14" rx="10.25" ry="12.709999999999999" fill="#b88058"/><path d="M9.635 18.04 A10.865 11.889999999999999 0 0 1 31.365000000000002 18.04 Q22.55 12.71 9.635 18.04 Z" fill="#1e1814"/><ellipse cx="17.015" cy="19.475" rx="1.435" ry="0.9225" fill="#2a1e1a"/><ellipse cx="23.985" cy="19.475" rx="1.435" ry="0.9225" fill="#2a1e1a"/><path d="M17.015 25.625 Q20.5 28.29 23.985 25.625" fill="#f4ece6" stroke="#8a4a3a" stroke-width="0.8200000000000001"/></g></svg><div class="t" style="left:1464.70px;top:1055.82px;font-size:21px;line-height:21px;color:#262626;letter-spacing:0.75px;-webkit-text-stroke:0.6px currentColor;">Ruben Schleifer</div><div class="t" style="left:1464.70px;top:1083.86px;font-size:18.6px;line-height:18.6px;color:#2b2b2b;">Machine Learning Engineer - TL</div><div class="t" style="left:1464.70px;top:1108.37px;font-size:18.7px;line-height:18.7px;color:#6e6e6e;">Greater Seattle Area</div><div class="r" style="left:1392.5px;top:1159.7px;width:425px;height:117.5px;background:#f8f8f8;border-radius:6px;"></div><svg class="r" style="left:1413px;top:1180.2px;" width="41" height="41" viewBox="0 0 41 41"><clipPath id="pc4"><circle cx="20.5" cy="20.5" r="20.3"/></clipPath><g clip-path="url(#pc4)"><rect x="0.0" y="0.0" width="20.5" height="41.0" fill="#f0a888"/><rect x="20.5" y="0.0" width="20.5" height="41.0" fill="#e8e8e8"/><ellipse cx="20.5" cy="22.55" rx="15.17" ry="20.09" fill="#161210"/><path d="M0.0 41.0 Q4.099999999999998 31.775 20.5 32.8 Q36.900000000000006 31.775 41.0 41.0 Z" fill="#1e1e1e"/><rect x="17.425" y="27.675" width="6.1499999999999995" height="7.175" fill="#c89070"/><ellipse cx="20.5" cy="22.14" rx="9.737499999999999" ry="12.074499999999999" fill="#c89070"/><path d="M9.635 19.475 A10.865 11.889999999999999 0 0 1 31.365000000000002 19.475 Q22.55 12.71 9.635 19.475 Z" fill="#161210"/><ellipse cx="17.015" cy="19.475" rx="1.435" ry="0.9225" fill="#2a1e1a"/><ellipse cx="23.985" cy="19.475" rx="1.435" ry="0.9225" fill="#2a1e1a"/><path d="M17.015 25.625 Q20.5 28.29 23.985 25.625" fill="#f4ece6" stroke="#8a4a3a" stroke-width="0.8200000000000001"/></g></svg><div class="t" style="left:1464.70px;top:1183.52px;font-size:21px;line-height:21px;color:#262626;letter-spacing:0.75px;-webkit-text-stroke:0.6px currentColor;">Charlie Baptista</div><div class="t" style="left:1464.70px;top:1211.56px;font-size:18.6px;line-height:18.6px;color:#2b2b2b;">Principal Engineer</div><div class="t" style="left:1464.70px;top:1236.07px;font-size:18.7px;line-height:18.7px;color:#6e6e6e;">Greater Seattle Area</div><div class="r" style="left:348px;top:954.8px;width:993.4px;height:400px;background:#ffffff;border-radius:10px;"></div><div class="t" style="left:379.00px;top:989.40px;font-size:21.5px;line-height:21.5px;color:#262626;letter-spacing:0.62px;-webkit-text-stroke:0.4px currentColor;">Outreach status</div><div class="r" style="left:379.3px;top:1034.6px;width:224px;height:143.8px;border:1.2px solid #e2e2e2;border-radius:6px;background:#fff;"></div><div class="t" style="left:395.00px;top:1052.69px;font-size:16.2px;line-height:16.2px;color:#262626;letter-spacing:0.45px;-webkit-text-stroke:0.5px currentColor;">Started</div><svg class="r" style="left:572.0999999999999px;top:1052.5px;" width="17" height="17" viewBox="0 0 17 17"><circle cx="8.5" cy="8.5" r="7.6" fill="none" stroke="#4a4a4a" stroke-width="1.3"/><path d="M8.5 7.2 V12.6" stroke="#4a4a4a" stroke-width="1.4"/><circle cx="8.5" cy="4.9" r="0.95" fill="#4a4a4a"/></svg><svg class="r" style="left:394.6px;top:1090.0px;" width="36" height="36" viewBox="0 0 36 36"><circle cx="18" cy="18" r="14.5" fill="none" stroke="#e3e3e3" stroke-width="7"/><circle cx="18" cy="18" r="14.5" fill="none" stroke="#751cb0" stroke-width="7"/></svg><div class="t" style="left:439.80px;top:1086.18px;font-size:43.5px;line-height:43.5px;color:#262626;font-weight:700;letter-spacing:1.2px;">100%</div><div class="t" style="left:395.00px;top:1145.73px;font-size:16.5px;line-height:16.5px;color:#6b6b6b;"><b style="color:#555">150</b> of <b style="color:#555">150</b> started</div><div class="r" style="left:615px;top:1034.6px;width:224px;height:143.8px;border:1.2px solid #e2e2e2;border-radius:6px;background:#fff;"></div><div class="t" style="left:630.70px;top:1052.69px;font-size:16.2px;line-height:16.2px;color:#262626;letter-spacing:0.45px;-webkit-text-stroke:0.5px currentColor;">Opened</div><svg class="r" style="left:807.8px;top:1052.5px;" width="17" height="17" viewBox="0 0 17 17"><circle cx="8.5" cy="8.5" r="7.6" fill="none" stroke="#4a4a4a" stroke-width="1.3"/><path d="M8.5 7.2 V12.6" stroke="#4a4a4a" stroke-width="1.4"/><circle cx="8.5" cy="4.9" r="0.95" fill="#4a4a4a"/></svg><svg class="r" style="left:630.3px;top:1090.0px;" width="36" height="36" viewBox="0 0 36 36"><circle cx="18" cy="18" r="14.5" fill="none" stroke="#e3e3e3" stroke-width="7"/><path d="M18 3.5 A14.5 14.5 0 1 1 5.29 24.99" fill="none" stroke="#751cb0" stroke-width="7" stroke-linecap="round"/></svg><div class="t" style="left:675.50px;top:1086.18px;font-size:43.5px;line-height:43.5px;color:#262626;font-weight:700;letter-spacing:1.2px;">67%</div><div class="t" style="left:630.70px;top:1145.73px;font-size:16.5px;line-height:16.5px;color:#6b6b6b;"><b style="color:#555">85</b> opened an email</div><div class="r" style="left:850.6px;top:1034.6px;width:224px;height:143.8px;border:1.2px solid #e2e2e2;border-radius:6px;background:#fff;"></div><div class="t" style="left:866.30px;top:1052.69px;font-size:16.2px;line-height:16.2px;color:#262626;letter-spacing:0.45px;-webkit-text-stroke:0.5px currentColor;">Clicked</div><svg class="r" style="left:1043.3999999999999px;top:1052.5px;" width="17" height="17" viewBox="0 0 17 17"><circle cx="8.5" cy="8.5" r="7.6" fill="none" stroke="#4a4a4a" stroke-width="1.3"/><path d="M8.5 7.2 V12.6" stroke="#4a4a4a" stroke-width="1.4"/><circle cx="8.5" cy="4.9" r="0.95" fill="#4a4a4a"/></svg><svg class="r" style="left:865.9px;top:1090.0px;" width="36" height="36" viewBox="0 0 36 36"><circle cx="18" cy="18" r="14.5" fill="none" stroke="#e3e3e3" stroke-width="7"/><path d="M18 3.5 A14.5 14.5 0 0 1 22.48 31.79" fill="none" stroke="#751cb0" stroke-width="7" stroke-linecap="round"/></svg><div class="t" style="left:911.10px;top:1086.18px;font-size:43.5px;line-height:43.5px;color:#262626;font-weight:700;letter-spacing:1.2px;">45%</div><div class="t" style="left:866.30px;top:1145.73px;font-size:16.5px;line-height:16.5px;color:#6b6b6b;"><b style="color:#555">67</b> clicked on a link</div><div class="r" style="left:1086.5px;top:1034.6px;width:224px;height:143.8px;border:1.2px solid #e2e2e2;border-radius:6px;background:#fff;"></div><div class="t" style="left:1102.20px;top:1052.69px;font-size:16.2px;line-height:16.2px;color:#262626;letter-spacing:0.45px;-webkit-text-stroke:0.5px currentColor;">Replied</div><svg class="r" style="left:1279.3px;top:1052.5px;" width="17" height="17" viewBox="0 0 17 17"><circle cx="8.5" cy="8.5" r="7.6" fill="none" stroke="#4a4a4a" stroke-width="1.3"/><path d="M8.5 7.2 V12.6" stroke="#4a4a4a" stroke-width="1.4"/><circle cx="8.5" cy="4.9" r="0.95" fill="#4a4a4a"/></svg><svg class="r" style="left:1101.8px;top:1090.0px;" width="36" height="36" viewBox="0 0 36 36"><circle cx="18" cy="18" r="14.5" fill="none" stroke="#e3e3e3" stroke-width="7"/><path d="M18 3.5 A14.5 14.5 0 0 1 32.47 17.09" fill="none" stroke="#751cb0" stroke-width="7" stroke-linecap="round"/></svg><div class="t" style="left:1147.00px;top:1086.18px;font-size:43.5px;line-height:43.5px;color:#262626;font-weight:700;letter-spacing:1.2px;">24%</div><div class="t" style="left:1102.20px;top:1145.73px;font-size:16.5px;line-height:16.5px;color:#6b6b6b;"><b style="color:#555">28</b> replied to an email</div><div class="r" style="left:379.3px;top:1190.5px;width:224px;height:143.8px;border:1.2px solid #e2e2e2;border-radius:6px;background:#fff;"></div><div class="t" style="left:395.00px;top:1208.59px;font-size:16.2px;line-height:16.2px;color:#262626;letter-spacing:0.45px;-webkit-text-stroke:0.5px currentColor;">Unsubscribed</div><svg class="r" style="left:572.0999999999999px;top:1208.4px;" width="17" height="17" viewBox="0 0 17 17"><circle cx="8.5" cy="8.5" r="7.6" fill="none" stroke="#4a4a4a" stroke-width="1.3"/><path d="M8.5 7.2 V12.6" stroke="#4a4a4a" stroke-width="1.4"/><circle cx="8.5" cy="4.9" r="0.95" fill="#4a4a4a"/></svg><svg class="r" style="left:394.6px;top:1245.9px;" width="36" height="36" viewBox="0 0 36 36"><circle cx="18" cy="18" r="14.5" fill="none" stroke="#e3e3e3" stroke-width="7"/><path d="M18 0.5 V7.5" stroke="#751cb0" stroke-width="2"/></svg><div class="t" style="left:439.80px;top:1242.08px;font-size:43.5px;line-height:43.5px;color:#262626;font-weight:700;letter-spacing:1.2px;">2%</div><div class="r" style="left:615px;top:1190.5px;width:224px;height:143.8px;border:1.2px solid #e2e2e2;border-radius:6px;background:#fff;"></div><div class="t" style="left:630.70px;top:1208.59px;font-size:16.2px;line-height:16.2px;color:#262626;letter-spacing:0.45px;-webkit-text-stroke:0.5px currentColor;">Exported</div><svg class="r" style="left:807.8px;top:1208.4px;" width="17" height="17" viewBox="0 0 17 17"><circle cx="8.5" cy="8.5" r="7.6" fill="none" stroke="#4a4a4a" stroke-width="1.3"/><path d="M8.5 7.2 V12.6" stroke="#4a4a4a" stroke-width="1.4"/><circle cx="8.5" cy="4.9" r="0.95" fill="#4a4a4a"/></svg><svg class="r" style="left:630.3px;top:1245.9px;" width="36" height="36" viewBox="0 0 36 36"><circle cx="18" cy="18" r="14.5" fill="none" stroke="#e3e3e3" stroke-width="7"/></svg><div class="t" style="left:675.50px;top:1242.08px;font-size:43.5px;line-height:43.5px;color:#262626;font-weight:700;letter-spacing:1.2px;">0%</div><div class="r" style="left:850.6px;top:1190.5px;width:224px;height:143.8px;border:1.2px solid #e2e2e2;border-radius:6px;background:#fff;"></div><div class="t" style="left:866.30px;top:1208.59px;font-size:16.2px;line-height:16.2px;color:#262626;letter-spacing:0.45px;-webkit-text-stroke:0.5px currentColor;">Ended</div><svg class="r" style="left:1043.3999999999999px;top:1208.4px;" width="17" height="17" viewBox="0 0 17 17"><circle cx="8.5" cy="8.5" r="7.6" fill="none" stroke="#4a4a4a" stroke-width="1.3"/><path d="M8.5 7.2 V12.6" stroke="#4a4a4a" stroke-width="1.4"/><circle cx="8.5" cy="4.9" r="0.95" fill="#4a4a4a"/></svg><svg class="r" style="left:865.9px;top:1245.9px;" width="36" height="36" viewBox="0 0 36 36"><circle cx="18" cy="18" r="14.5" fill="none" stroke="#e3e3e3" stroke-width="7"/><path d="M18 3.5 A14.5 14.5 0 1 1 6.83 8.76" fill="none" stroke="#751cb0" stroke-width="7" stroke-linecap="round"/></svg><div class="t" style="left:911.10px;top:1242.08px;font-size:43.5px;line-height:43.5px;color:#262626;font-weight:700;letter-spacing:1.2px;">86%</div>
</body></html>
